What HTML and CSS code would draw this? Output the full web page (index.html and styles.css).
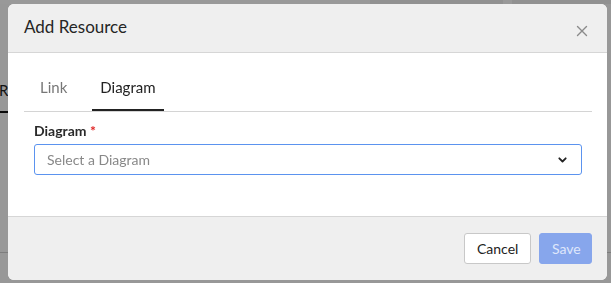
FILE: index.html
```html
<!DOCTYPE html>
<html lang="en">
<head>
<meta charset="utf-8">
<title>Add Resource</title>
<link rel="stylesheet" href="styles.css">
</head>
<body>
<div class="page">
  <div class="page-top">
    <span class="top-a"></span>
    <span class="top-b"></span>
    <span class="top-c"></span>
  </div>
  <div class="page-tabs">
    <span class="page-tab">Re</span>
  </div>
  <div class="page-rule"></div>
</div>
<div class="backdrop"></div>
<div class="modal" role="dialog" aria-labelledby="modal-title">
  <header class="modal-header">
    <h2 class="modal-title" id="modal-title">Add Resource</h2>
    <button class="close-btn" aria-label="Close">
      <svg width="12" height="12" viewBox="0 0 12 12"><path d="M1.5 1.5 L10.5 10.5 M10.5 1.5 L1.5 10.5" stroke="#8a8a8a" stroke-width="1.4" fill="none" stroke-linecap="round"/></svg>
    </button>
  </header>
  <div class="modal-body">
    <nav class="tabs">
      <span class="tab">Link</span>
      <span class="tab active">Diagram</span>
    </nav>
    <div class="form">
      <label class="field-label">Diagram <span class="req">*</span></label>
      <div class="select">
        <span class="placeholder">Select a Diagram</span>
        <svg class="chev" width="9" height="6" viewBox="0 0 9 6"><path d="M1.3 1.3 L4.5 4.5 L7.7 1.3" stroke="#222" stroke-width="1.8" fill="none" stroke-linecap="round" stroke-linejoin="round"/></svg>
      </div>
    </div>
  </div>
  <footer class="modal-footer">
    <button class="btn btn-cancel">Cancel</button>
    <button class="btn btn-save" disabled>Save</button>
  </footer>
</div>
</body>
</html>
```

FILE: styles.css
```css
* { box-sizing: border-box; }
html, body { margin: 0; padding: 0; }
body {
  width: 611px;
  height: 283px;
  overflow: hidden;
  background: #fdfdfd;
  font-family: Lato, "Liberation Sans", sans-serif;
  position: relative;
}
.page { height: 283px; }
.page-top {
  display: flex;
  height: 4px;
}
.top-a { width: 370px; background: #ffffff; }
.top-b { width: 133px; background: #f2f2f2; }
.top-c { width: 9px; background: #ffffff; }
.page-top::after { content: ""; flex: 1; background: #f2f2f2; }
.page-tabs {
  padding-top: 76px;
  display: flex;
}
.page-tab {
  margin-left: -1px;
  width: 9px;
  overflow: hidden;
  white-space: nowrap;
  font-size: 15px;
  line-height: 20px;
  color: #222;
  padding-bottom: 11px;
  border-bottom: 2px solid #111;
}
.page-rule {
  margin-top: 139px;
  height: 1px;
  background: #d0d0d0;
}
.backdrop {
  position: fixed;
  inset: 0;
  background: rgba(0, 0, 0, 0.4);
}
.modal {
  position: absolute;
  left: 8px;
  top: 4px;
  width: 599px;
  height: 276px;
  background: #fff;
  border-radius: 6px;
  overflow: hidden;
  display: flex;
  flex-direction: column;
}
.modal-header {
  height: 49px;
  flex: none;
  background: #efefef;
  border-bottom: 1px solid #d6d6d6;
  display: flex;
  align-items: center;
  justify-content: space-between;
  padding: 0 19px 0 16px;
}
.modal-title {
  margin: 0;
  font-size: 17px;
  font-weight: 400;
  color: #252525;
  line-height: 24px;
  margin-top: -2px;
}
.close-btn {
  background: none;
  border: 0;
  padding: 0;
  width: 12px;
  height: 12px;
  margin-top: 6px;
  display: flex;
}
.modal-body {
  flex: 1;
  padding: 24px 15px 0 16px;
}
.tabs {
  display: flex;
  gap: 17px;
  padding-left: 8px;
  border-bottom: 1px solid #d4d4d4;
}
.tab {
  padding: 0 8px 12px;
  font-size: 15px;
  line-height: 20px;
  color: #777;
  border-bottom: 2px solid transparent;
}
.tab.active {
  color: #222;
  border-bottom-color: #222;
}
.form {
  padding: 10px 10px 0;
}
.field-label {
  display: block;
  font-size: 14px;
  font-weight: 700;
  line-height: 18px;
  color: #2a2a2a;
  margin-bottom: 4px;
}
.req { color: #e02424; }
.select {
  height: 31px;
  border: 1px solid #5b93ef;
  border-radius: 3px;
  display: flex;
  align-items: center;
  justify-content: space-between;
  padding: 0 14px 0 12px;
}
.placeholder {
  font-size: 14px;
  color: #888;
}
.modal-footer {
  height: 64px;
  flex: none;
  background: #efefef;
  border-top: 1px solid #d6d6d6;
  display: flex;
  justify-content: flex-end;
  align-items: flex-start;
  gap: 8px;
  padding: 16px 15px 0 0;
}
.btn {
  height: 31px;
  border-radius: 3px;
  font-family: inherit;
  font-size: 14px;
  padding: 0 12px;
}
.btn-cancel {
  background: #fff;
  border: 1px solid #c8c8c8;
  color: #222;
  width: 67px;
}
.btn-save {
  background: #87a6ec;
  border: 1px solid #87a6ec;
  color: #dfe7fb;
  width: 53px;
}
```
